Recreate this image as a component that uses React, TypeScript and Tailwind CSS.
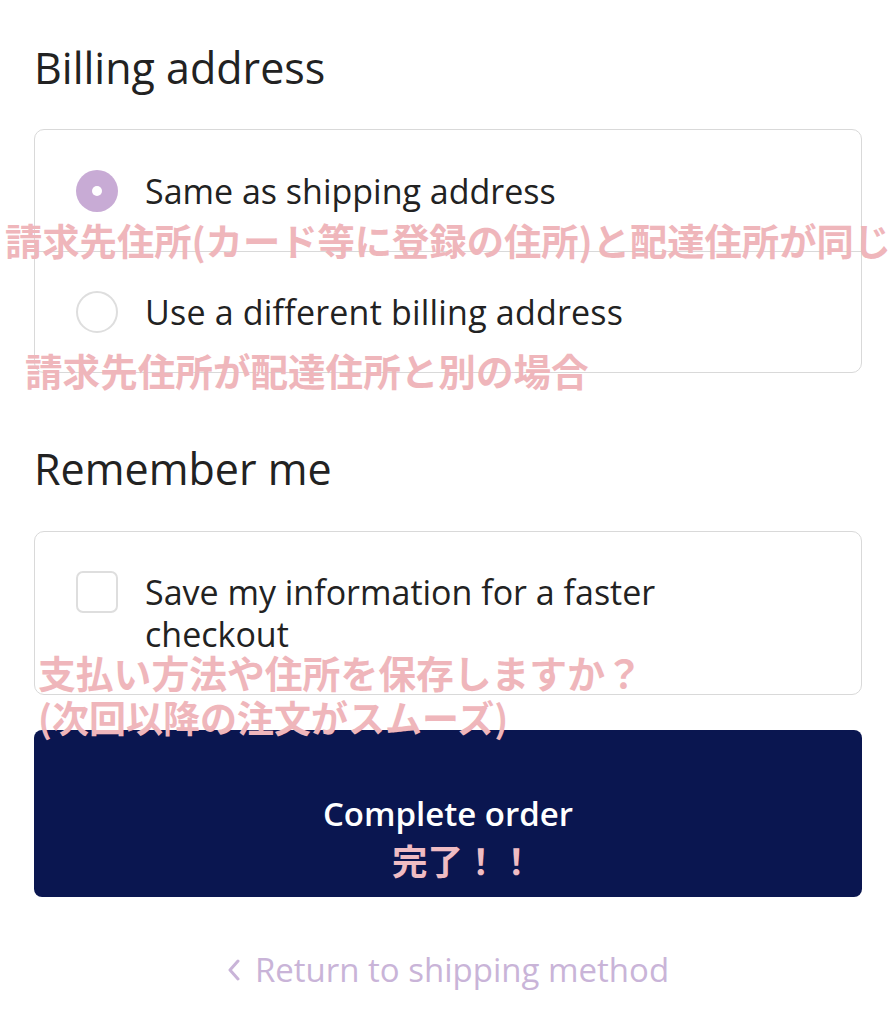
const notes = [
  { text: "請求先住所(カード等に登録の住所)と配達住所が同じ", className: "left-[5px] top-[222px] text-[37.3px]" },
  { text: "請求先住所が配達住所と別の場合", className: "left-[25px] top-[351px] text-[37.6px]" },
  { text: "支払い方法や住所を保存しますか？", className: "left-[38px] top-[653px] text-[37.8px]" },
  { text: "(次回以降の注文がスムーズ)", className: "left-[38px] top-[699px] text-[37px]" },
];

const Radio = ({ checked }: { checked?: boolean }) =>
  checked ? (
    <span className="flex h-[42px] w-[42px] shrink-0 items-center justify-center rounded-full bg-[#c8abd5]">
      <span className="h-[10px] w-[10px] rounded-full bg-white" />
    </span>
  ) : (
    <span className="h-[42px] w-[42px] shrink-0 rounded-full border-2 border-[#dedede] bg-white" />
  );

export default function App() {
  return (
    <div className="relative h-[1024px] w-[896px] overflow-hidden bg-white font-['Open_Sans',sans-serif] text-[#222]">
      <div className="px-[34px] pt-[40px]">
        <h2 className="text-[43px] leading-[56px]">Billing address</h2>

        <div className="mt-[33px] rounded-[10px] border border-[#d9d9d9]">
          <label className="flex h-[121px] items-center gap-[27px] px-[41px]">
            <Radio checked />
            <span className="text-[34px] leading-[42px]">Same as shipping address</span>
          </label>
          <div className="h-px bg-[#d9d9d9]" />
          <label className="flex h-[120px] items-center gap-[27px] px-[41px]">
            <Radio />
            <span className="text-[34px] leading-[42px] tracking-[0.2px]">Use a different billing address</span>
          </label>
        </div>

        <h2 className="mt-[68px] text-[43px] leading-[56px]">Remember me</h2>

        <div className="mt-[34px] rounded-[10px] border border-[#d9d9d9] px-[41px] py-[39px]">
          <label className="flex items-start gap-[27px]">
            <span className="h-[42px] w-[42px] shrink-0 rounded-[7px] border-2 border-[#dedede] bg-white" />
            <span className="w-[560px] text-[34px] leading-[42px]">
              Save my information for a faster checkout
            </span>
          </label>
        </div>

        <button className="mt-[35px] flex h-[167px] w-full items-center justify-center rounded-[8px] bg-[#0a1650] text-[33px] font-semibold text-white">
          Complete order
        </button>

        <a className="mt-[52px] flex items-center justify-center gap-[14px] text-[33px] leading-[42px] text-[#c9b4d8]">
          <svg width="14" height="22" viewBox="0 0 14 22" fill="none">
            <polyline points="11,2 3,11 11,20" stroke="#c9b4d8" strokeWidth="3" strokeLinecap="round" strokeLinejoin="round" />
          </svg>
          Return to shipping method
        </a>
      </div>

      {notes.map((n) => (
        <div
          key={n.text}
          className={`absolute whitespace-nowrap font-['Noto_Sans_CJK_JP',sans-serif] font-bold leading-[37px] text-[#efb6bb] ${n.className}`}
        >
          {n.text}
        </div>
      ))}
      <div className="absolute left-[392px] top-[842px] whitespace-nowrap font-['Noto_Sans_CJK_JP',sans-serif] text-[35.5px] font-bold leading-[35px] text-[#efbcc3]">
        完了！！
      </div>
    </div>
  );
}
